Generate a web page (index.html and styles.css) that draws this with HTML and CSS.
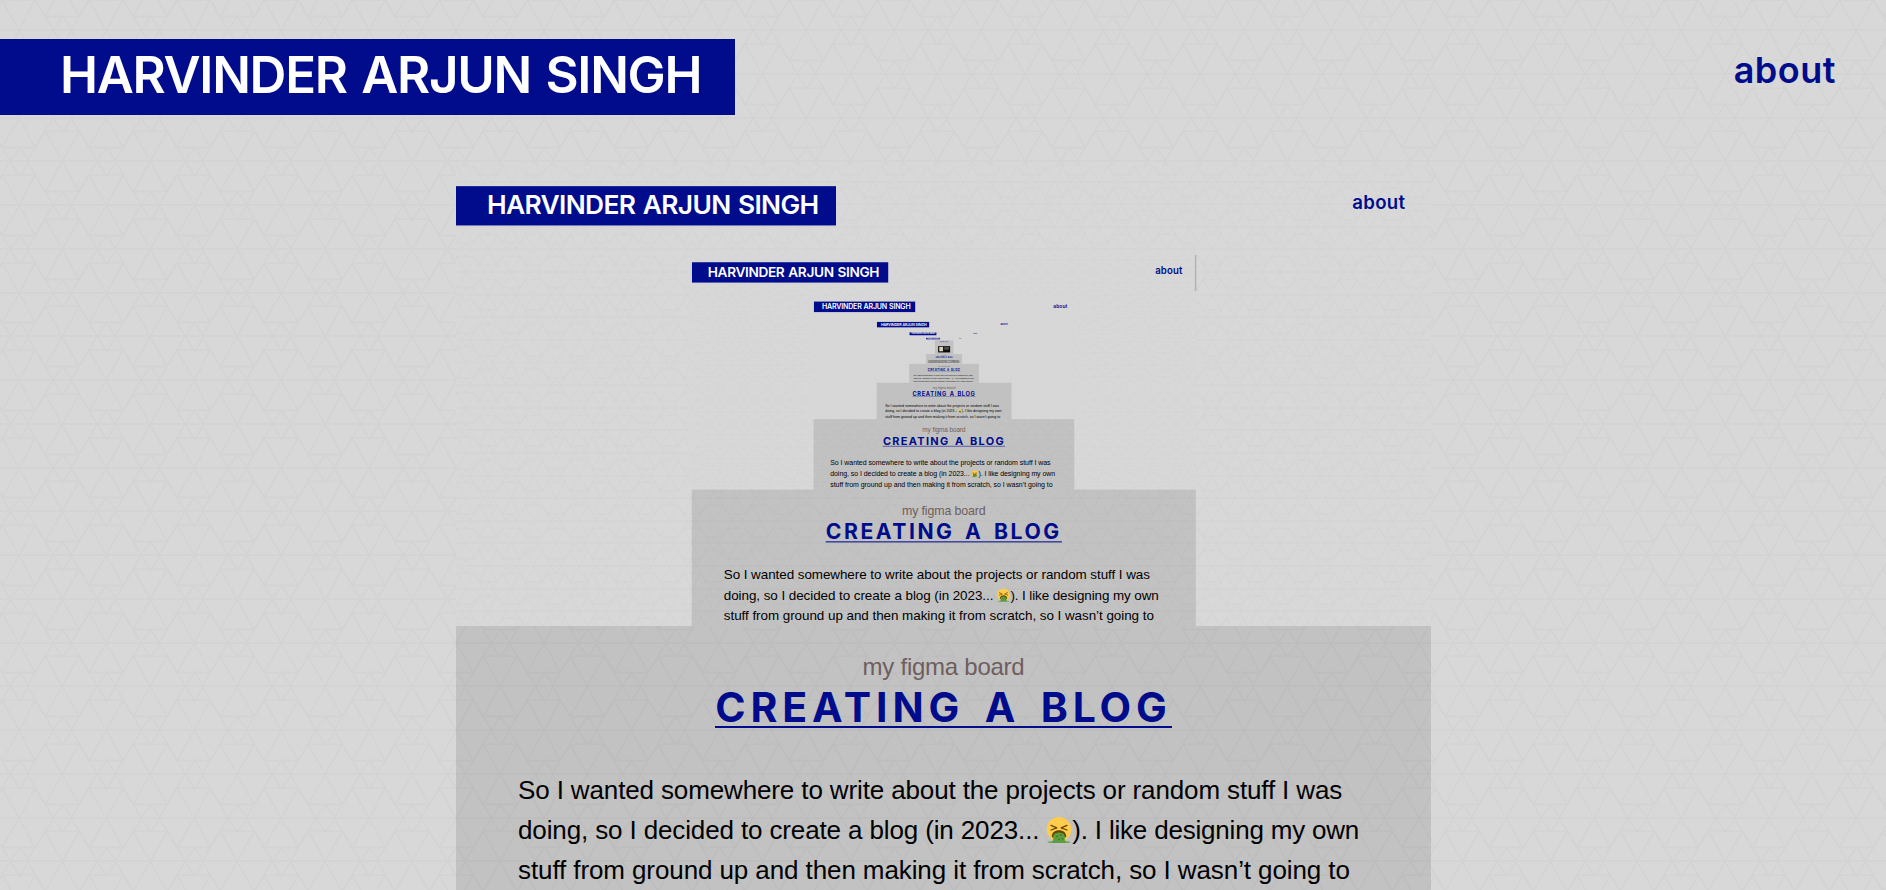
FILE: index.html
```
<!DOCTYPE html>
<html lang="en">
<head>
<meta charset="utf-8">
<title>Harvinder Arjun Singh</title>
<link rel="stylesheet" href="styles.css">
</head>
<body>
<div id="root" class="viewport"></div>

<template id="page-template">
  <div class="page">
    <header class="header">
      <div class="brand"><span class="brand-text">HARVINDER ARJUN SINGH</span></div>
      <a class="about">about</a>
    </header>
    <main class="post">
      <div class="shot"></div>
      <article class="article">
        <div class="caption"><span class="caption-text">my figma board</span></div>
        <h1 class="title"><span class="title-text">CREATING A BLOG</span></h1>
        <p class="copy">
          <span class="line line-1">So I wanted somewhere to write about the projects or random stuff I was</span>
          <span class="line line-2"><span class="l2a">doing, so I decided to create a blog (in 2023...</span><svg class="emoji" viewBox="0 0 36 36"><circle cx="18" cy="17" r="17" fill="#ffcc4d"/><path d="M7 11.500l8 3.500-8 3M29 11.500l-8 3.500 8 3" fill="none" stroke="#664500" stroke-width="1.800" stroke-linecap="round" stroke-linejoin="round"/><path d="M8 27c0-5 4-8.500 10-8.500S28 22 28 27c0 3-20 3-20 0z" fill="#664500"/><path d="M2 35c2-2 6-.5 8-2.500V26c2-6 14-6 16 0v6.500c2 2 6 .5 8 2.500 0 1.500-32 1.500-32 0z" fill="#5c9e3f"/><path d="M14 26h2v2h-2zM20 24h2v2h-2zM17 30h2v2h-2zM22 29h2v2h-2z" fill="#3e721d"/></svg><span class="l2b">). I like designing my own</span></span>
          <span class="line line-3">stuff from ground up and then making it from scratch, so I wasn’t going to</span>
        </p>
      </article>
    </main>
  </div>
</template>
<script src="script.js"></script>
</body>
</html>
```
FILE: styles.css
```
* { box-sizing: border-box; }
html, body { margin: 0; height: 100%; overflow: hidden; background: #d8d8d8; }
.viewport { width: 1886px; height: 890px; overflow: hidden; }

.page {
  width: 1886px;
  height: 890px;
  overflow: hidden;
  padding-top: 39px;
  background-color: #d8d8d8;
  background-image: url("data:image/svg+xml,%3Csvg xmlns='http://www.w3.org/2000/svg' width='87.5' height='87.5' viewBox='0 0 262.5 262.5'%3E%3Cdefs%3E%3Cg id='h'%3E%3Cpath d='M-50-89H51L105 0 51 91H-50L-104 0zM-50-89L51 91M51-89L-50 91M-131 0H131M133-40L105 0 133 46 161 0z'/%3E%3C/g%3E%3C/defs%3E%3Cg fill='none' stroke='%23000' opacity='.025' stroke-width='4'%3E%3Cuse href='%23h' x='0' y='0'/%3E%3Cuse href='%23h' x='262.5' y='0'/%3E%3Cuse href='%23h' x='0' y='262.5'/%3E%3Cuse href='%23h' x='262.5' y='262.5'/%3E%3Cuse href='%23h' x='131.2' y='131.2'/%3E%3Cuse href='%23h' x='-131.2' y='131.2'/%3E%3C/g%3E%3C/svg%3E");
  background-size: 87.5px 87.5px;
  background-position: 62.3px 73.8px;
}

.header {
  display: flex;
  justify-content: space-between;
  height: 127px;
  padding-right: 50px;
  font-family: Inter, "Liberation Sans", sans-serif;
}
.brand {
  width: 735px;
  height: 76px;
  padding-left: 60px;
  background: #000c8c;
  color: #fff;
  font-size: 51px;
  font-weight: 600;
  letter-spacing: -1.3px;
  word-spacing: 3px;
  line-height: 72px;
  white-space: nowrap;
}
.about {
  height: 64px;
  color: #000c8c;
  font-size: 36px;
  font-weight: 600;
  letter-spacing: .5px;
  line-height: 63px;
}

.post { width: 975px; margin-left: 456px; }
.shot { width: 975px; height: 460px; overflow: hidden; }
.shot > .page { transform: scale(.517); transform-origin: 0 0; }

.article {
  position: relative;
  height: 800px;
  padding: 24px 62px 0;
  background: rgba(0, 0, 0, .1);
  font-family: "Liberation Sans", Arial, sans-serif;
}
.caption {
  height: 34px;
  text-align: center;
  font-size: 24px;
  letter-spacing: -.25px;
  line-height: 34px;
  color: #6f5e5e;
}
.title {
  height: 48px;
  margin: 0;
  text-align: center;
  font-family: Inter, "Liberation Sans", sans-serif;
  font-size: 41px;
  font-weight: 700;
  line-height: 46px;
  white-space: nowrap;
  color: #000c8c;
}
.title-text {
  display: inline-block;
  height: 44px;
  border-bottom: 2px solid #000c8c;
  letter-spacing: 4.85px;
  word-spacing: 6px;
}
.copy { margin: 38px 0 0; font-size: 26px; line-height: 40px; color: #000; }
.line { display: flex; align-items: center; height: 40px; white-space: nowrap; letter-spacing: -.13px; }
.l2b { letter-spacing: -.2px; }
.line-3 { letter-spacing: -.1px; }
.emoji { width: 26px; height: 26px; margin: 0 0 0 7px; }

.level-1::after {
  content: "";
  position: absolute;
  left: 1429px;
  top: 172px;
  width: 3px;
  height: 70px;
  background: #b4b4b4;
}

/* Innermost page: no nested shot, the article carries a photo */
.final .shot { height: 0; }
.final .article { padding-top: 16px; }
.final .photo {
  display: flex;
  justify-content: space-between;
  width: 628px;
  height: 330px;
  margin: 50px auto 0;
  padding: 40px 60px;
  background: #0c0c0c;
}
.photo-light { width: 200px; height: 230px; background: #d6d0bd; }
.photo-card { width: 250px; height: 150px; background: #4c4c4c; }
```
FILE: script.js
```
// Nest the page inside its own screenshot slot, six levels deep.
const DEPTH = 6;
const template = document.getElementById('page-template');
let slot = document.getElementById('root');
for (let level = 0; level <= DEPTH; level++) {
  const page = template.content.firstElementChild.cloneNode(true);
  page.classList.add('level-' + level);
  if (level === DEPTH) {
    page.classList.add('final');
    page.querySelector('.article').insertAdjacentHTML(
      'beforeend',
      '<div class="photo"><div class="photo-light"></div><div class="photo-card"></div></div>'
    );
  }
  slot.appendChild(page);
  slot = page.querySelector('.shot');
}
```
